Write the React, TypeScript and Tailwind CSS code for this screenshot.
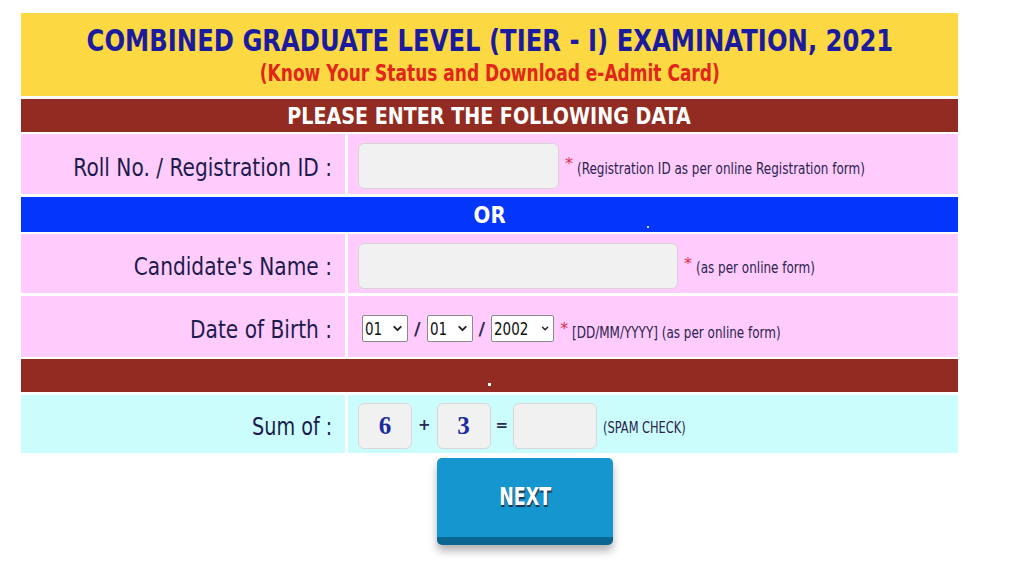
import { ChevronDown } from 'lucide-react'

const font = { fontFamily: '"DejaVu Sans", Verdana, sans-serif' }

function Label({ text }: { text: string }) {
  return (
    <div className="flex items-center justify-end bg-[#ffccfd] pr-[13px] pt-[7px]">
      <span className="inline-block origin-right scale-x-[0.84] text-[24px] text-[#1d1b4d]">{text}</span>
    </div>
  )
}

function Note({ text }: { text: string }) {
  return (
    <span className="ml-[6px] flex items-center">
      <span className="text-[16px] leading-none text-[#e0304a]">*</span>
      <span className="ml-[4px] mt-[10px] inline-block origin-left scale-x-[0.8] whitespace-nowrap text-[15px] text-[#2a2350]">
        {text}
      </span>
    </span>
  )
}

function FakeSelect({ value, width }: { value: string; width: string }) {
  return (
    <div
      className={`flex h-[27px] items-center justify-between rounded-[2px] border border-[#8a8a8a] bg-white pl-[2px] pr-[3px] ${width}`}
    >
      <span className="inline-block origin-left scale-x-[0.75] text-[18px] text-[#111]">{value}</span>
      <ChevronDown className="h-[13px] w-[13px] text-[#222]" strokeWidth={3.5} />
    </div>
  )
}

function Slash() {
  return <span className="mx-[6px] text-[18px] font-bold text-[#2a2a55]">/</span>
}

export default function App() {
  return (
    <div className="min-h-[569px] bg-white" style={font}>
      <div className="ml-[21px] flex w-[937px] flex-col gap-[2.5px] pt-[13px]">
        {/* header */}
        <div className="flex h-[83px] flex-col items-center bg-[#fcd843] pt-[11px]">
          <span className="inline-block scale-x-[0.81] whitespace-nowrap text-[30px] font-bold leading-[34px] text-[#1b1ba0]">
            COMBINED GRADUATE LEVEL (TIER - I) EXAMINATION, 2021
          </span>
          <span className="inline-block scale-x-[0.74] whitespace-nowrap text-[23px] font-bold leading-[30px] text-[#e3261a]">
            (Know Your Status and Download e-Admit Card)
          </span>
        </div>

        <div className="flex h-[33px] items-center justify-center bg-[#922b21] pt-[2px]">
          <span className="inline-block scale-x-[0.83] whitespace-nowrap text-[23px] font-bold text-white">
            PLEASE ENTER THE FOLLOWING DATA
          </span>
        </div>

        {/* roll no */}
        <div className="grid h-[60px] grid-cols-[324px_1fr] gap-[3px]">
          <Label text="Roll No. / Registration ID :" />
          <div className="flex items-center bg-[#ffccfd] pl-[10px]">
            <input className="mt-[4px] h-[46px] w-[201px] rounded-md border border-[#d8d2d6] bg-[#f1f1f1] outline-none" />
            <Note text="(Registration ID as per online Registration form)" />
          </div>
        </div>

        <div className="relative flex h-[35px] items-center justify-center bg-[#0335fb] pt-[2px]">
          <span className="inline-block scale-x-[0.86] text-[23px] font-bold text-white">OR</span>
          <span className="absolute left-[626px] top-[29px] h-[2px] w-[2px] bg-[#c9d4ff]" />
        </div>

        {/* name */}
        <div className="grid h-[59px] grid-cols-[324px_1fr] gap-[3px]">
          <Label text="Candidate's Name :" />
          <div className="flex items-center bg-[#ffccfd] pl-[10px]">
            <input className="mt-[5px] h-[46px] w-[320px] rounded-md border border-[#d8d2d6] bg-[#f1f1f1] outline-none" />
            <Note text="(as per online form)" />
          </div>
        </div>

        {/* dob */}
        <div className="grid h-[61px] grid-cols-[324px_1fr] gap-[3px]">
          <Label text="Date of Birth :" />
          <div className="flex items-center bg-[#ffccfd] pl-[14px] pt-[5px]">
            <FakeSelect value="01" width="w-[46px]" />
            <Slash />
            <FakeSelect value="01" width="w-[46px]" />
            <Slash />
            <FakeSelect value="2002" width="w-[63px]" />
            <Note text="[DD/MM/YYYY] (as per online form)" />
          </div>
        </div>

        <div className="flex h-[33px] items-end justify-center bg-[#922b21] pb-[6px]">
          <span className="h-[3px] w-[3px] bg-white" />
        </div>

        {/* spam check */}
        <div className="grid h-[58px] grid-cols-[324px_1fr] gap-[3px]">
          <div className="flex items-center justify-end bg-[#ccfdfd] pr-[13px] pt-[6px]">
            <span className="inline-block origin-right scale-x-[0.8] text-[24px] text-[#1d1b4d]">Sum of :</span>
          </div>
          <div className="flex items-center bg-[#ccfdfd] pl-[10px] pt-[4px]">
            <div className="flex h-[46px] w-[54px] items-center justify-center rounded-md border border-[#d8d8d8] bg-[#f1f1f1]">
              <span
                className="text-[25px] font-bold text-[#1b2a9e]"
                style={{ fontFamily: '"Liberation Serif", serif' }}
              >
                6
              </span>
            </div>
            <span className="mx-[6px] text-[15px] font-bold text-[#2a2a55]">+</span>
            <div className="flex h-[46px] w-[54px] items-center justify-center rounded-md border border-[#d8d8d8] bg-[#f1f1f1]">
              <span
                className="text-[25px] font-bold text-[#1b2a9e]"
                style={{ fontFamily: '"Liberation Serif", serif' }}
              >
                3
              </span>
            </div>
            <span className="mx-[5px] text-[15px] font-bold text-[#2a2a55]">=</span>
            <input className="h-[46px] w-[84px] rounded-md border border-[#d8d8d8] bg-[#f1f1f1] outline-none" />
            <span className="ml-[6px] mt-[6px] inline-block origin-left scale-x-[0.76] whitespace-nowrap text-[15px] text-[#2a2350]">
              (SPAM CHECK)
            </span>
          </div>
        </div>
      </div>

      <div className="ml-[437px] mt-[5px] w-[176px]">
        <button className="flex h-[87px] w-full items-center justify-center rounded-[5px] border-b-[8px] border-[#0a6590] bg-[#1696cf] shadow-[0_6px_8px_rgba(0,0,0,0.3)]">
          <span className="inline-block scale-x-[0.7] text-[25px] font-bold text-white [text-shadow:1px_2px_1px_#1a3350]">
            NEXT
          </span>
        </button>
      </div>
    </div>
  )
}
